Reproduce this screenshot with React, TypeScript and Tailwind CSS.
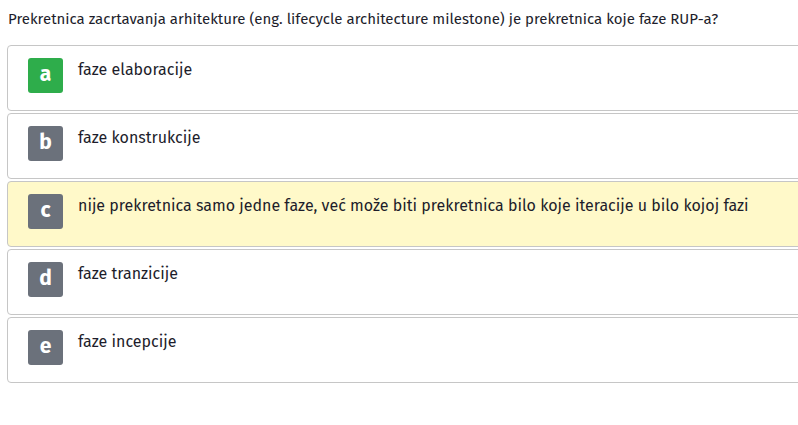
import React from 'react';

const options = [
    { key: 'a', text: 'faze elaboracije', correct: true },
    { key: 'b', text: 'faze konstrukcije' },
    { key: 'c', text: 'nije prekretnica samo jedne faze, već može biti prekretnica bilo koje iteracije u bilo kojoj fazi', selected: true },
    { key: 'd', text: 'faze tranzicije' },
    { key: 'e', text: 'faze incepcije' },
];

export default function App() {
    return (
        <div className="w-[798px] h-[425px] overflow-hidden bg-white text-[#1d1d2b]" style={{ fontFamily: '"Fira Sans", "Open Sans", "Noto Sans", sans-serif' }}>
            <div className="pl-[8px] pt-[7px] text-[15px] leading-[24px] whitespace-nowrap">
                Prekretnica zacrtavanja arhitekture (eng. lifecycle architecture milestone) je prekretnica koje faze RUP-a?
            </div>
            <div className="ml-[7px] mt-[14px] w-[820px] flex flex-col gap-[2px]">
                {options.map((o) => (
                    <div
                        key={o.key}
                        className={`h-[66px] flex items-start gap-[15px] pl-[20px] pt-[12px] border border-[#c6c6c6] rounded-[4px] ${o.selected ? 'bg-[#fff9c9]' : 'bg-white'}`}
                    >
                        <div className={`w-[35px] h-[35px] shrink-0 rounded-[3px] flex items-center justify-center text-white font-bold text-[21px] leading-none pb-[2px] ${o.correct ? 'bg-[#2ead4b]' : 'bg-[#6b717b]'}`}>
                            {o.key}
                        </div>
                        <div className="text-[16px] leading-[24px] mt-0">{o.text}</div>
                    </div>
                ))}
            </div>
        </div>
    );
}
